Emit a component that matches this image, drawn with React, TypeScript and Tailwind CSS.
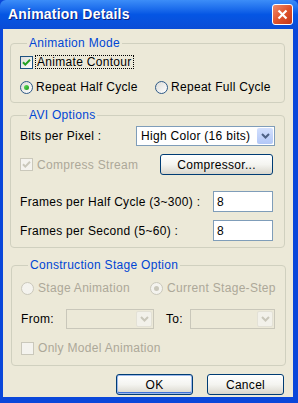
import type { ReactNode } from "react";

function Check({ checked, disabled }: { checked?: boolean; disabled?: boolean }) {
  return (
    <span
      className={`w-[13px] h-[13px] shrink-0 border flex items-center justify-center ${
        disabled ? "border-[#CAC8BB] bg-[#F4F3EE]" : "border-[#1C5180] bg-gradient-to-br from-[#DCDCD7] to-white"
      }`}
    >
      {checked && (
        <svg width="9" height="9" viewBox="0 0 9 9">
          <path
            d="M1 4.2 L3.3 6.6 L8 1.8"
            fill="none"
            stroke={disabled ? "#CAC8BB" : "#21A121"}
            strokeWidth="2"
          />
        </svg>
      )}
    </span>
  );
}

function Radio({ checked, disabled }: { checked?: boolean; disabled?: boolean }) {
  return (
    <span
      className={`w-[13px] h-[13px] shrink-0 rounded-full border flex items-center justify-center ${
        disabled ? "border-[#CAC8BB] bg-[#F4F3EE]" : "border-[#2E5A87] bg-gradient-to-br from-[#DCDCD7] to-white"
      }`}
    >
      {checked && (
        <span
          className={`w-[5px] h-[5px] rounded-full ${
            disabled ? "bg-[#CAC8BB]" : "bg-gradient-to-br from-[#5DDD59] to-[#1A9A1A]"
          }`}
        />
      )}
    </span>
  );
}

function Chevron({ color }: { color: string }) {
  return (
    <svg width="9" height="6" viewBox="0 0 9 6">
      <path d="M1 1 L4.5 4.5 L8 1" fill="none" stroke={color} strokeWidth="2" />
    </svg>
  );
}

function Combo({ value, width, disabled }: { value?: string; width: string; disabled?: boolean }) {
  return (
    <div
      className={`${width} h-[20px] border flex items-center justify-between p-[1px] ${
        disabled ? "border-[#C9C7BA] bg-[#ECE9D8]" : "border-[#7F9DB9] bg-white"
      }`}
    >
      <span className="pl-[3px] leading-none">{value}</span>
      <span
        className={`w-[16px] h-full rounded-[2px] flex items-center justify-center ${
          disabled ? "bg-[#F2F1EA] border border-[#E3E1D6]" : "bg-gradient-to-b from-[#D3E0FD] to-[#B2C7F7]"
        }`}
      >
        <Chevron color={disabled ? "#C9C7BA" : "#4D6185"} />
      </span>
    </div>
  );
}

function Button({ children, width, isDefault }: { children: ReactNode; width: string; isDefault?: boolean }) {
  return (
    <button
      className={`${width} h-[21px] rounded-[3px] border border-[#003C74] bg-gradient-to-b from-white via-[#F4F4F0] to-[#D9D6CC] flex items-center justify-center leading-none ${
        isDefault ? "shadow-[inset_0_0_0_1px_#9DB9EB,inset_0_-1px_0_1px_#3D70D7]" : ""
      }`}
    >
      {children}
    </button>
  );
}

function Group({ label, className, children }: { label: string; className?: string; children: ReactNode }) {
  return (
    <fieldset className={`border border-[#D0D0BF] rounded-[4px] ${className ?? ""}`}>
      <legend className="ml-[7px] px-[2px] text-[#0046D5] leading-[14px]">{label}</legend>
      {children}
    </fieldset>
  );
}

const dim = "text-[#ACA899]";

export default function App() {
  return (
    <div className="w-[298px] h-[403px] flex flex-col bg-[#0A47DA] font-['Liberation_Sans',Arial,sans-serif] text-[12px] tracking-[0.3px] text-black">
      {/* Title bar */}
      <div className="h-[29px] shrink-0 flex items-center justify-between pl-[8px] pr-[5px] rounded-t-[6px] bg-gradient-to-b from-[#3C8DF8] via-[#0556E4] to-[#0A4CD6]">
        <span className="text-white font-bold text-[14px] tracking-[0.2px] [text-shadow:1px_1px_0_#0A1E80]">
          Animation Details
        </span>
        <span className="w-[21px] h-[21px] rounded-[3px] border border-white bg-gradient-to-br from-[#EE8A6A] via-[#E0532B] to-[#C2361A] flex items-center justify-center">
          <svg width="11" height="11" viewBox="0 0 11 11">
            <path d="M1.5 1.5 L9.5 9.5 M9.5 1.5 L1.5 9.5" stroke="white" strokeWidth="2.2" />
          </svg>
        </span>
      </div>

      {/* Client area */}
      <div className="flex-1 ml-[3px] mr-[5px] mb-[6px] bg-[#ECE9D8] pt-[7px] pl-[7px] pr-[8px] flex flex-col">
        <Group label="Animation Mode" className="pl-[9px] pt-[4px] pb-[7px]">
          <div className="h-[16px] flex items-center gap-[2px]">
            <Check checked />
            <span className="border border-dotted border-black px-[1px] leading-[12px]">Animate Contour</span>
          </div>
          <div className="h-[16px] mt-[9px] flex items-center">
            <Radio checked />
            <span className="ml-[3px] w-[119px]">Repeat Half Cycle</span>
            <Radio />
            <span className="ml-[3px]">Repeat Full Cycle</span>
          </div>
        </Group>

        <Group label="AVI Options" className="mt-[5px] pl-[9px] pr-[9px] pt-[4px] pb-[6px]">
          <div className="flex items-center justify-between">
            <span>Bits per Pixel :</span>
            <Combo value="High Color (16 bits)" width="w-[139px]" />
          </div>
          <div className="mt-[8px] flex items-center justify-between pr-[2px]">
            <div className={`flex items-center gap-[4px] ${dim}`}>
              <Check checked disabled />
              <span>Compress Stream</span>
            </div>
            <Button width="w-[113px]">Compressor...</Button>
          </div>
          <div className="mt-[16px] flex items-center justify-between pr-[2px]">
            <span>Frames per Half Cycle (3~300) :</span>
            <span className="w-[60px] h-[21px] border border-[#7F9DB9] bg-white pl-[3px] flex items-center">8</span>
          </div>
          <div className="mt-[8px] flex items-center justify-between pr-[2px]">
            <span>Frames per Second (5~60) :</span>
            <span className="w-[60px] h-[21px] border border-[#7F9DB9] bg-white pl-[3px] flex items-center">8</span>
          </div>
        </Group>

        <Group label="Construction Stage Option" className={`mt-[10px] ml-[1px] mr-[-1px] pl-[9px] pr-[9px] pt-[8px] pb-[9px]`}>
          <div className={`h-[16px] flex items-center ${dim}`}>
            <Radio disabled />
            <span className="ml-[4px] w-[112px]">Stage Animation</span>
            <Radio checked disabled />
            <span className="ml-[4px]">Current Stage-Step</span>
          </div>
          <div className="mt-[13px] flex items-center">
            <span className="w-[45px]">From:</span>
            <Combo width="w-[88px]" disabled />
            <span className="ml-[12px] w-[24px]">To:</span>
            <Combo width="w-[85px]" disabled />
          </div>
          <div className={`mt-[11px] h-[16px] flex items-center gap-[4px] ${dim}`}>
            <Check disabled />
            <span>Only Model Animation</span>
          </div>
        </Group>

        <div className="mt-[8px] flex justify-end gap-[14px] pr-[1px]">
          <Button width="w-[77px]" isDefault>
            OK
          </Button>
          <Button width="w-[77px]">Cancel</Button>
        </div>
      </div>
    </div>
  );
}
